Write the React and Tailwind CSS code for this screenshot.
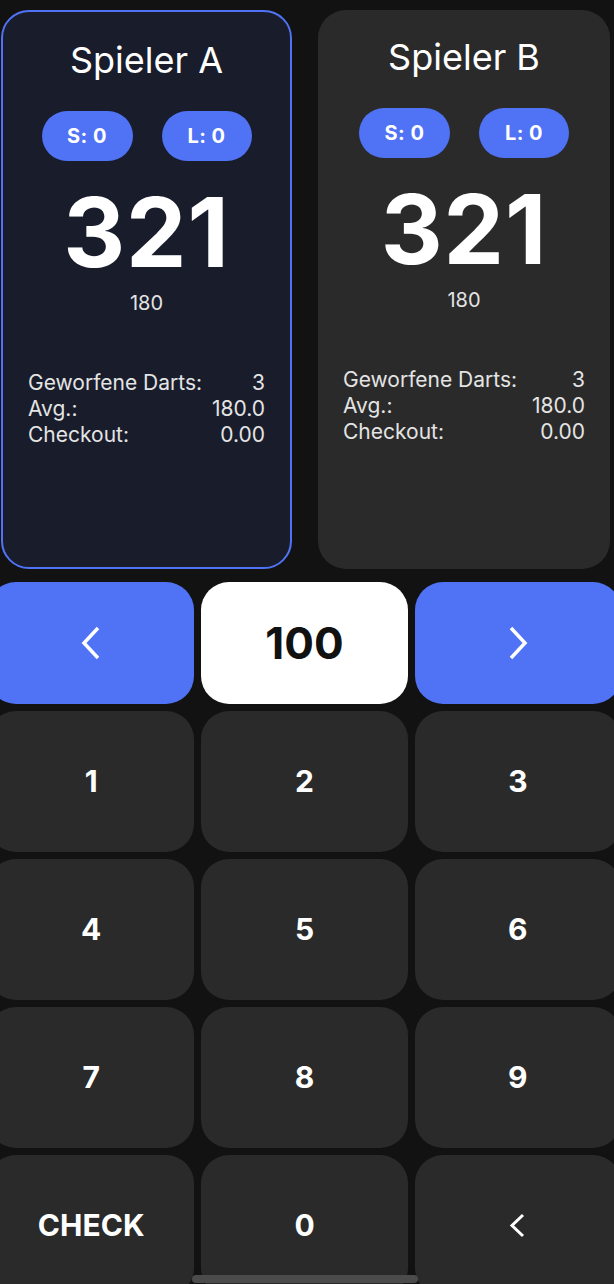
import React from 'react';

const font = { fontFamily: 'Inter, "Noto Sans", sans-serif' };

const Chevron = ({ dir = 'left', w = 20, h = 36, sw = 3.5 }) => (
    <svg width={w} height={h} viewBox={`0 0 ${w} ${h}`} fill="none">
        <polyline
            points={dir === 'left'
                ? `${w - 3},3 3,${h / 2} ${w - 3},${h - 3}`
                : `3,3 ${w - 3},${h / 2} 3,${h - 3}`}
            stroke="white"
            strokeWidth={sw}
            strokeLinejoin="miter"
        />
    </svg>
);

const PlayerCard = ({ name, active }) => (
    <div
        className={`shrink-0 flex flex-col rounded-[28px] h-[559px] ${active
            ? 'w-[291px] bg-[#191c2b] border-2 border-[#5073f5] pt-[28px]'
            : 'w-[292px] bg-[#2a2a2a] pt-[27px]'
            }`}
    >
        <div className="text-center text-[36px] leading-[40px] text-white">{name}</div>

        <div className="mt-[31px] flex justify-center gap-[29px]">
            <div className="w-[91px] h-[50px] rounded-full bg-[#5073f5] flex items-center justify-center text-white text-[20px] font-bold tracking-wide">
                S: 0
            </div>
            <div className="w-[90px] h-[50px] rounded-full bg-[#5073f5] flex items-center justify-center text-white text-[20px] font-bold tracking-wide">
                L: 0
            </div>
        </div>

        <div className="mt-[21px] text-center text-[96px] leading-[100px] font-bold text-white tracking-[0.01em]">321</div>
        <div className="mt-[9px] text-center text-[20px] leading-[24px] text-[#e4e4e4]">180</div>

        <div className="mt-[55px] px-[25px] text-[21px] leading-[26px] text-[#e4e4e4]">
            <div className="flex justify-between"><span>Geworfene Darts:</span><span>3</span></div>
            <div className="flex justify-between"><span>Avg.:</span><span>180.0</span></div>
            <div className="flex justify-between"><span>Checkout:</span><span>0.00</span></div>
        </div>
    </div>
);

const Key = ({ children }) => (
    <div className="h-[141px] rounded-[28px] bg-[#2a2a2a] flex items-center justify-center text-white text-[30px] font-bold">
        {children}
    </div>
);

export default function App() {
    return (
        <div className="relative w-[614px] h-[1284px] overflow-hidden bg-[#121212]" style={font}>
            <div className="flex gap-[26px] pl-[1px] pt-[10px]">
                <PlayerCard name="Spieler A" active />
                <PlayerCard name="Spieler B" />
            </div>

            <div className="mt-[13px] ml-[-12px] w-[633px] grid grid-cols-3 gap-[7px]">
                <div className="h-[122px] rounded-[28px] bg-[#5073f5] flex items-center justify-center">
                    <Chevron dir="left" />
                </div>
                <div className="h-[122px] rounded-[28px] bg-white flex items-center justify-center text-[44px] font-bold text-[#111]">
                    100
                </div>
                <div className="h-[122px] rounded-[28px] bg-[#5073f5] flex items-center justify-center">
                    <Chevron dir="right" />
                </div>

                {['1', '2', '3', '4', '5', '6', '7', '8', '9'].map((n) => (
                    <Key key={n}>{n}</Key>
                ))}

                <Key>CHECK</Key>
                <Key>0</Key>
                <Key><Chevron dir="left" w={17} h={27} sw={3} /></Key>
            </div>

            {/* home indicator */}
            <div className="absolute left-[192px] bottom-[1px] w-[226px] h-[8px] rounded-full bg-[#4b4b4b]" />
        </div>
    );
}
